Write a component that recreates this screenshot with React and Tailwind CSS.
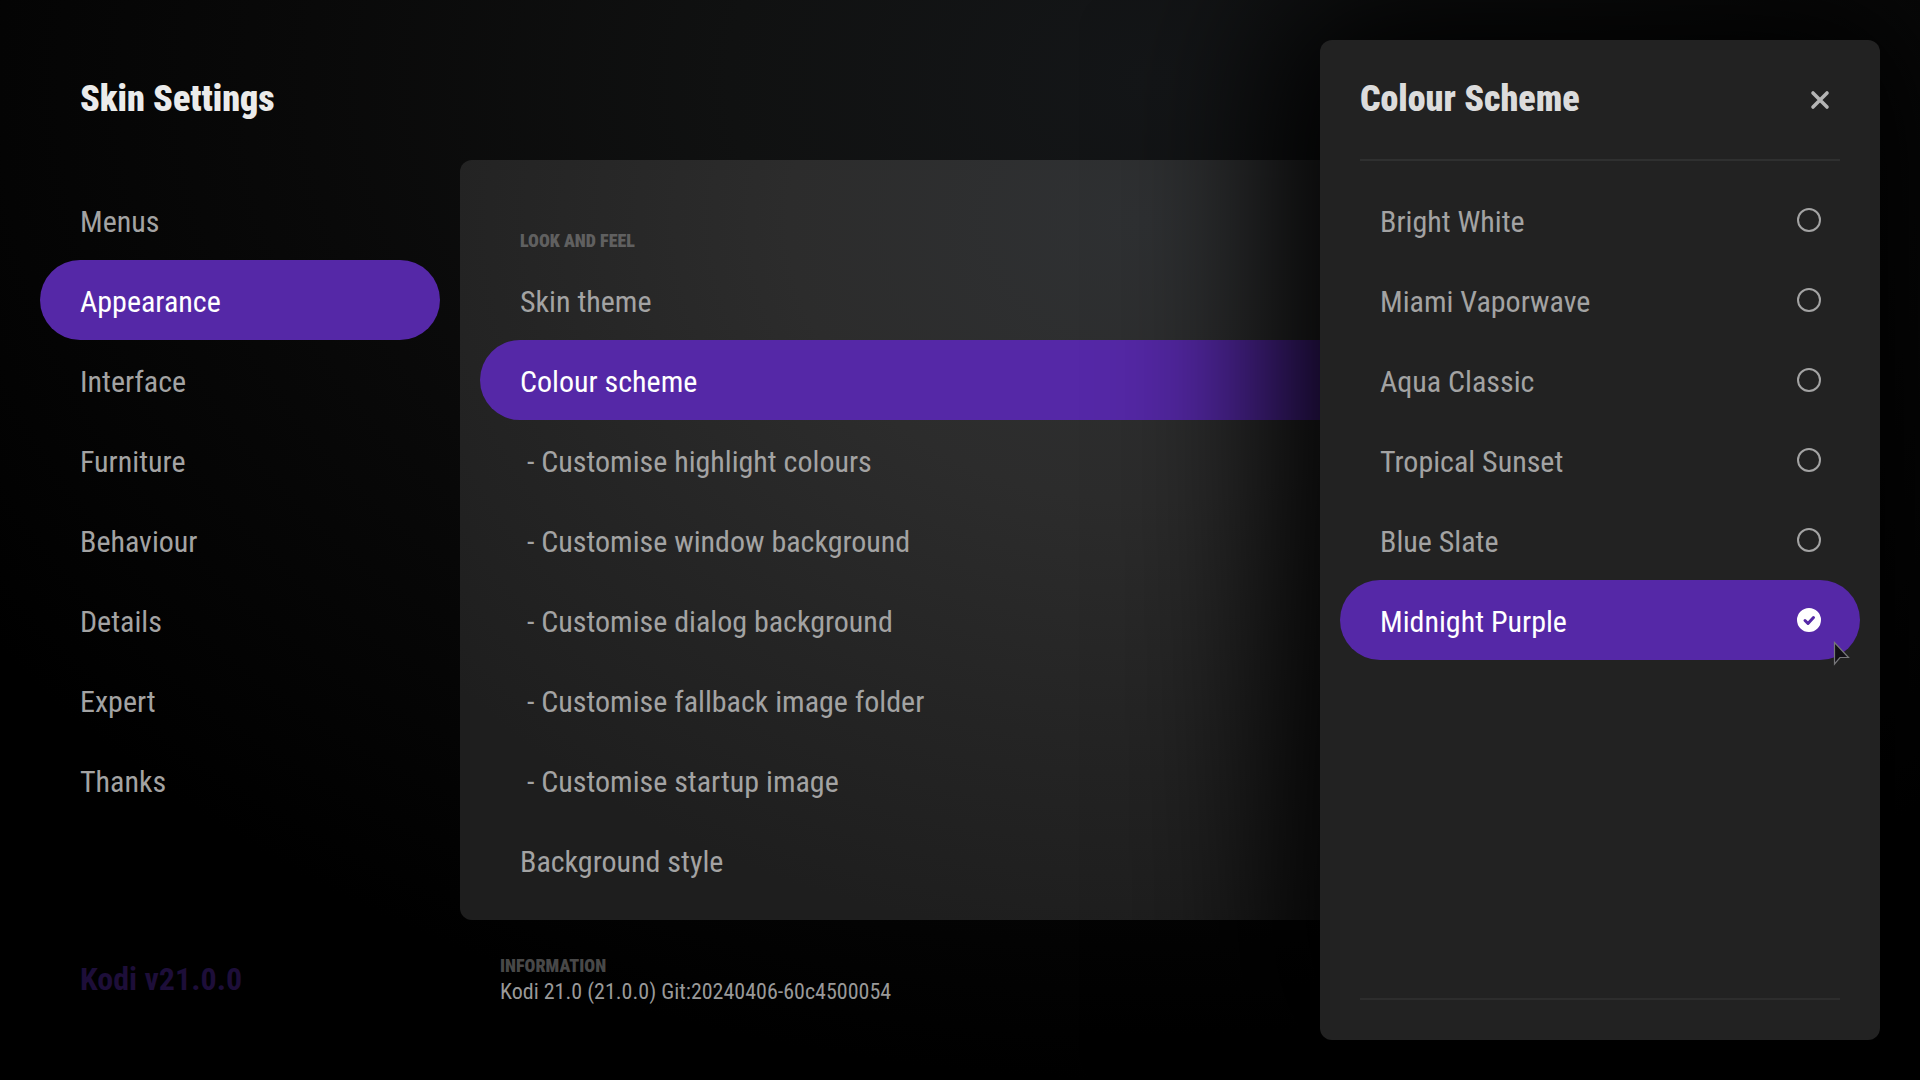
import { useState } from "react";

const sections = ["Menus", "Appearance", "Interface", "Furniture", "Behaviour", "Details", "Expert", "Thanks"];

const settings = [
  "Skin theme",
  "Colour scheme",
  " - Customise highlight colours",
  " - Customise window background",
  " - Customise dialog background",
  " - Customise fallback image folder",
  " - Customise startup image",
  "Background style",
];

const schemes = ["Bright White", "Miami Vaporwave", "Aqua Classic", "Tropical Sunset", "Blue Slate", "Midnight Purple"];

function Row({ label, active, onClick }) {
  return (
    <button
      type="button"
      onClick={onClick}
      className={`flex h-20 w-full items-center rounded-full px-10 pt-1 text-left text-[30px] leading-none whitespace-pre ${
        active ? "bg-[#5528a7] text-white" : "text-[#a3a3a3]"
      }`}
    >
      {label}
    </button>
  );
}

function Scheme({ label, checked, onChange }) {
  return (
    <label
      className={`flex h-20 items-center justify-between rounded-full pr-[39px] pl-10 text-[30px] leading-none ${
        checked ? "bg-[#5528a7] text-white" : "text-[#a3a3a3]"
      }`}
    >
      <span className="pt-1">{label}</span>
      <span className="grid size-6 place-items-center">
        <input
          type="radio"
          name="scheme"
          checked={checked}
          onChange={onChange}
          className="col-start-1 row-start-1 size-6 appearance-none rounded-full border-2 border-[#a3a3a3] checked:border-white checked:bg-white"
        />
        {checked && (
          <svg viewBox="0 0 24 24" className="pointer-events-none col-start-1 row-start-1 size-6" fill="none" stroke="#5528a7" strokeWidth="3" strokeLinecap="round" strokeLinejoin="round" aria-hidden="true">
            <path d="M8 12.500l3 3 5.500-6" />
          </svg>
        )}
      </span>
    </label>
  );
}

export default function App() {
  const [section, setSection] = useState("Appearance");
  const [setting, setSetting] = useState("Colour scheme");
  const [scheme, setScheme] = useState("Midnight Purple");

  return (
    <div className="relative min-h-screen overflow-hidden bg-black bg-[radial-gradient(ellipse_1400px_1000px_at_1150px_80px,#141618_0%,#101111_30%,#090909_60%,#000_100%)] font-['Roboto_Condensed','Roboto',sans-serif]">
      <main className="flex min-h-screen flex-col px-10">
        <header className="flex h-40 items-start px-10 pt-[75px]">
          <h1 className="text-[36px] leading-[48px] font-black text-[#ebebeb]">Skin Settings</h1>
        </header>

        <div className="flex flex-1 gap-5">
          <nav className="flex w-[400px] shrink-0 flex-col pt-5">
            {sections.map((s) => (
              <Row key={s} label={s} active={s === section} onClick={() => setSection(s)} />
            ))}
            <p className="mt-auto mb-[81px] px-10 text-[32px] leading-[40px] font-bold text-[#1d0e39]">Kodi v21.0.0</p>
          </nav>

          <div className="flex min-w-0 flex-1 flex-col">
            <section className="rounded-xl bg-[radial-gradient(ellipse_1000px_800px_at_680px_60px,#2f3133_0%,#2c2c2c_35%,#242424_65%,#1e1e1e_90%)] px-5 py-5">
              <h2 className="flex h-20 items-end px-10 pb-[7px] text-[18px] leading-6 font-black text-[#606060] uppercase">Look and feel</h2>
              {settings.map((s) => (
                <Row key={s} label={s} active={s === setting} onClick={() => setSetting(s)} />
              ))}
            </section>
            <footer className="px-10 pt-9">
              <h2 className="text-[18px] leading-5 font-black text-[#484848] uppercase">Information</h2>
              <p className="text-[22px] leading-8 text-[#999]">Kodi 21.0 (21.0.0) Git:20240406-60c4500054</p>
            </footer>
          </div>
        </div>
      </main>

      <div className="absolute inset-0 flex justify-end p-10">
        <section role="dialog" aria-labelledby="dialog-title" className="flex w-[560px] flex-col rounded-xl bg-[#222] shadow-[0_0_160px_50px_#000]">
          <header className="mx-10 flex h-[121px] items-center justify-between border-b-2 border-[#2f3030] pr-2">
            <h2 id="dialog-title" className="pb-0.5 text-[36px] leading-[48px] font-black text-[#dcdcdc]">Colour Scheme</h2>
            <button type="button" aria-label="Close">
              <svg viewBox="0 0 24 24" className="size-6" fill="none" stroke="#b5b5b5" strokeWidth="3.600" strokeLinecap="round" aria-hidden="true">
                <path d="M5 5l14 14M19 5l-14 14" />
              </svg>
            </button>
          </header>
          <div className="flex-1 px-5 pt-[19px]">
            {schemes.map((s) => (
              <Scheme key={s} label={s} checked={s === scheme} onChange={() => setScheme(s)} />
            ))}
          </div>
          <hr className="mx-10 mb-10 border-t-2 border-[#2d2d2d]" />
        </section>
      </div>

      <svg viewBox="0 0 18 26" className="pointer-events-none absolute top-[641px] right-[69px] h-[26px] w-[18px]" aria-hidden="true">
        <path d="M1.500 1.500v21.500l5.500-6.500h8.500z" fill="#121016" stroke="#77777a" strokeWidth="1.200" />
      </svg>
    </div>
  );
}
